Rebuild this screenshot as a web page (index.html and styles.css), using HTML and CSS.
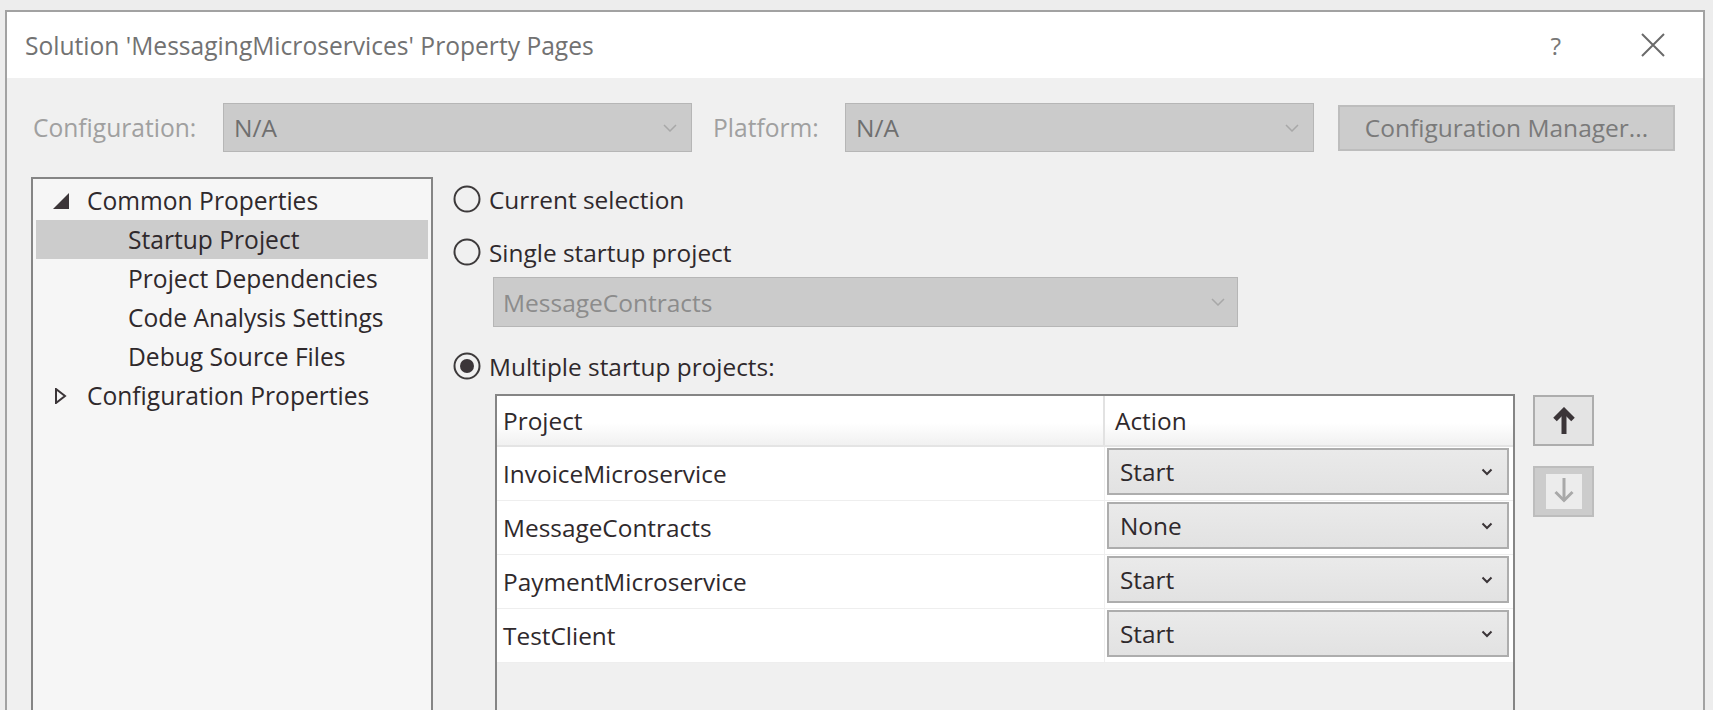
FILE: index.html
```html
<!DOCTYPE html>
<html>
<head>
<meta charset="utf-8">
<link rel="stylesheet" href="styles.css">
</head>
<body>
<div class="window">
  <div class="titlebar">
    <span class="title">Solution 'MessagingMicroservices' Property Pages</span>
    <span class="help">?</span>
    <svg class="close" width="24" height="24" viewBox="0 0 24 24"><path d="M1 1 L23 23 M23 1 L1 23" stroke="#6a6a6a" stroke-width="2" fill="none"/></svg>
  </div>
  <div class="body">
    <div class="config-row">
      <span class="cfg-label cfg-label-1">Configuration:</span>
      <div class="dcombo dcombo-cfg"><span>N/A</span><svg class="chev" width="14" height="8" viewBox="0 0 14 8"><path d="M1 1 L7 7 L13 1" stroke="#a8a8a8" stroke-width="1.5" fill="none"/></svg></div>
      <span class="cfg-label cfg-label-2">Platform:</span>
      <div class="dcombo dcombo-plat"><span>N/A</span><svg class="chev" width="14" height="8" viewBox="0 0 14 8"><path d="M1 1 L7 7 L13 1" stroke="#a8a8a8" stroke-width="1.5" fill="none"/></svg></div>
      <div class="dbutton">Configuration Manager...</div>
    </div>
    <div class="main">
      <div class="tree">
        <div class="tree-row lvl0"><svg class="tri" width="16" height="16" viewBox="0 0 16 16"><polygon points="16,0 16,16 0,16" fill="#3b3538"/></svg><span>Common Properties</span></div>
        <div class="tree-row lvl1 selected"><span>Startup Project</span></div>
        <div class="tree-row lvl1"><span>Project Dependencies</span></div>
        <div class="tree-row lvl1"><span>Code Analysis Settings</span></div>
        <div class="tree-row lvl1"><span>Debug Source Files</span></div>
        <div class="tree-row lvl0"><svg class="tri" width="16" height="16" viewBox="0 0 16 16"><polygon points="3,1 12,8 3,15" fill="none" stroke="#3b3538" stroke-width="2"/></svg><span>Configuration Properties</span></div>
      </div>
      <div class="content">
        <div class="radio-row r1"><svg class="radio" width="28" height="28" viewBox="0 0 28 28"><circle cx="14" cy="14" r="12.5" fill="none" stroke="#3d3a3b" stroke-width="2"/></svg><span>Current selection</span></div>
        <div class="radio-row r2"><svg class="radio" width="28" height="28" viewBox="0 0 28 28"><circle cx="14" cy="14" r="12.5" fill="none" stroke="#3d3a3b" stroke-width="2"/></svg><span>Single startup project</span></div>
        <div class="dcombo dcombo-single"><span>MessageContracts</span><svg class="chev" width="14" height="8" viewBox="0 0 14 8"><path d="M1 1 L7 7 L13 1" stroke="#a8a8a8" stroke-width="1.5" fill="none"/></svg></div>
        <div class="radio-row r3"><svg class="radio" width="28" height="28" viewBox="0 0 28 28"><circle cx="14" cy="14" r="12.5" fill="none" stroke="#3d3a3b" stroke-width="2"/><circle cx="14" cy="14" r="7" fill="#3b3538"/></svg><span>Multiple startup projects:</span></div>
        <div class="grid-wrap">
          <div class="grid">
            <div class="grid-head">
              <div class="cell-project">Project</div>
              <div class="cell-action">Action</div>
            </div>
            <div class="grid-row">
              <div class="cell-project">InvoiceMicroservice</div>
              <div class="cell-action"><div class="acombo"><span>Start</span><svg width="12" height="8" viewBox="0 0 12 8"><path d="M1.5 1.5 L6 6 L10.5 1.5" stroke="#3b3538" stroke-width="2" fill="none"/></svg></div></div>
            </div>
            <div class="grid-row">
              <div class="cell-project">MessageContracts</div>
              <div class="cell-action"><div class="acombo"><span>None</span><svg width="12" height="8" viewBox="0 0 12 8"><path d="M1.5 1.5 L6 6 L10.5 1.5" stroke="#3b3538" stroke-width="2" fill="none"/></svg></div></div>
            </div>
            <div class="grid-row">
              <div class="cell-project">PaymentMicroservice</div>
              <div class="cell-action"><div class="acombo"><span>Start</span><svg width="12" height="8" viewBox="0 0 12 8"><path d="M1.5 1.5 L6 6 L10.5 1.5" stroke="#3b3538" stroke-width="2" fill="none"/></svg></div></div>
            </div>
            <div class="grid-row">
              <div class="cell-project">TestClient</div>
              <div class="cell-action"><div class="acombo"><span>Start</span><svg width="12" height="8" viewBox="0 0 12 8"><path d="M1.5 1.5 L6 6 L10.5 1.5" stroke="#3b3538" stroke-width="2" fill="none"/></svg></div></div>
            </div>
          </div>
          <div class="side-btns">
            <div class="move-btn up"><svg width="24" height="27" viewBox="0 0 24 27"><path d="M12 4 L12 27" stroke="#3b3538" stroke-width="5" fill="none"/><path d="M3 12.5 L12 3.5 L21 12.5" stroke="#3b3538" stroke-width="5" fill="none"/></svg></div>
            <div class="move-btn down"><div class="inner"><svg width="24" height="27" viewBox="0 0 24 27"><path d="M12 0 L12 23" stroke="#a9a9a9" stroke-width="3" fill="none"/><path d="M3.5 14 L12 22.5 L20.5 14" stroke="#a9a9a9" stroke-width="3" fill="none"/></svg></div></div>
          </div>
        </div>
      </div>
    </div>
  </div>
</div>
</body>
</html>
```

FILE: styles.css
```css
* { box-sizing: border-box; }
html, body { margin: 0; padding: 0; }
body {
  width: 1713px;
  height: 710px;
  overflow: hidden;
  background: #ededed;
  font-family: "Open Sans", "Noto Sans", sans-serif;
  color: #2f292c;
}
.window {
  margin: 10px 0 0 5px;
  width: 1700px;
  height: 720px;
  border: 2px solid #a2a2a2;
  border-bottom: none;
  background: #f0f0f0;
  display: flex;
  flex-direction: column;
}
.titlebar {
  height: 66px;
  flex: none;
  background: #ffffff;
  display: flex;
  align-items: center;
  padding-left: 18px;
  padding-right: 38px;
}
.title {
  flex: 1;
  font-size: 24.6px;
  color: #727272;
}
.help {
  font-size: 24.5px;
  color: #777;
  margin-right: 80px;
}
.close { display: block; }
.body {
  flex: 1;
  padding: 25px 0 0 24px;
}
.config-row {
  display: flex;
  align-items: center;
  height: 49px;
  padding-left: 2px;
}
.cfg-label {
  font-size: 24.6px;
  color: #a0a0a0;
}
.cfg-label-1 { width: 190px; }
.cfg-label-2 { width: 132px; }
.dcombo {
  display: flex;
  align-items: center;
  justify-content: space-between;
  background: #cbcbcb;
  border: 1px solid #b6b6b6;
  color: #6f6f6f;
  font-size: 24.5px;
}
.dcombo-cfg, .dcombo-plat {
  width: 469px;
  height: 49px;
  padding: 0 14px 0 10px;
}
.dcombo-cfg { margin-right: 21px; }
.dcombo-plat { margin-right: 24px; }
.dbutton {
  width: 337px;
  height: 46px;
  background: #cccccc;
  border: 2px solid #bdbdbd;
  color: #7a7a7a;
  font-size: 24.5px;
  display: flex;
  align-items: center;
  justify-content: center;
}
.main {
  display: flex;
  margin-top: 25px;
}
.tree {
  width: 402px;
  height: 560px;
  flex: none;
  border: 2px solid #858585;
  border-bottom: none;
  background: #f6f6f6;
  padding-top: 2px;
  font-size: 24.6px;
  color: #2f292c;
}
.tree-row {
  height: 39px;
  margin: 0 3px;
  display: flex;
  align-items: center;
}
.tree-row.lvl0 { padding-left: 17px; }
.tree-row.lvl0 .tri { margin-right: 18px; }
.tree-row.lvl1 { padding-left: 92px; }
.tree-row.selected { background: #cccccc; }
.content {
  margin-left: 20px;
  display: flex;
  flex-direction: column;
  font-size: 24.4px;
  color: #2f292c;
}
.radio-row {
  height: 44px;
  display: flex;
  align-items: center;
}
.radio { margin-right: 8px; }
.r2 { margin-top: 9px; }
.r3 { margin-top: 17px; }
.dcombo-single {
  margin-left: 40px;
  margin-top: 3px;
  width: 745px;
  height: 50px;
  padding: 0 12px 0 9px;
  color: #8c8c8c;
}
.grid-wrap {
  display: flex;
  margin-left: 42px;
  margin-top: 6px;
  gap: 18px;
}
.grid {
  width: 1020px;
  height: 330px;
  border: 2px solid #858585;
  border-bottom: none;
  background: #f0f0f0;
}
.grid-head {
  display: flex;
  height: 51px;
  background: linear-gradient(#ffffff 55%, #f1f1f1);
  border-bottom: 2px solid #e4e4e4;
}
.grid-head .cell-project {
  width: 608px;
  padding-left: 6px;
  display: flex;
  align-items: center;
  border-right: 2px solid #e2e2e2;
}
.grid-head .cell-action {
  flex: 1;
  padding-left: 10px;
  display: flex;
  align-items: center;
}
.grid-row {
  display: flex;
  height: 54px;
  background: #ffffff;
  border-bottom: 1px solid #eeeeee;
}
.grid-row .cell-project {
  width: 608px;
  padding-left: 6px;
  display: flex;
  align-items: center;
  border-right: 1px solid #efefef;
}
.grid-row .cell-action {
  flex: 1;
  padding: 1px 4px 5px 2px;
}
.acombo {
  height: 100%;
  background: linear-gradient(#eaeaea, #e2e2e2);
  border: 2px solid #adadad;
  display: flex;
  align-items: center;
  justify-content: space-between;
  padding: 0 14px 0 11px;
}
.side-btns {
  display: flex;
  flex-direction: column;
  gap: 20px;
  margin-top: 1px;
}
.move-btn {
  width: 61px;
  height: 51px;
  display: flex;
  align-items: center;
  justify-content: center;
}
.move-btn.up {
  background: #e4e4e4;
  border: 2px solid #adadad;
}
.move-btn.down {
  background: #cccccc;
  border: 2px solid #bdbdbd;
}
.move-btn.down .inner {
  width: 36px;
  height: 35px;
  background: #ececec;
  display: flex;
  align-items: center;
  justify-content: center;
}
```
